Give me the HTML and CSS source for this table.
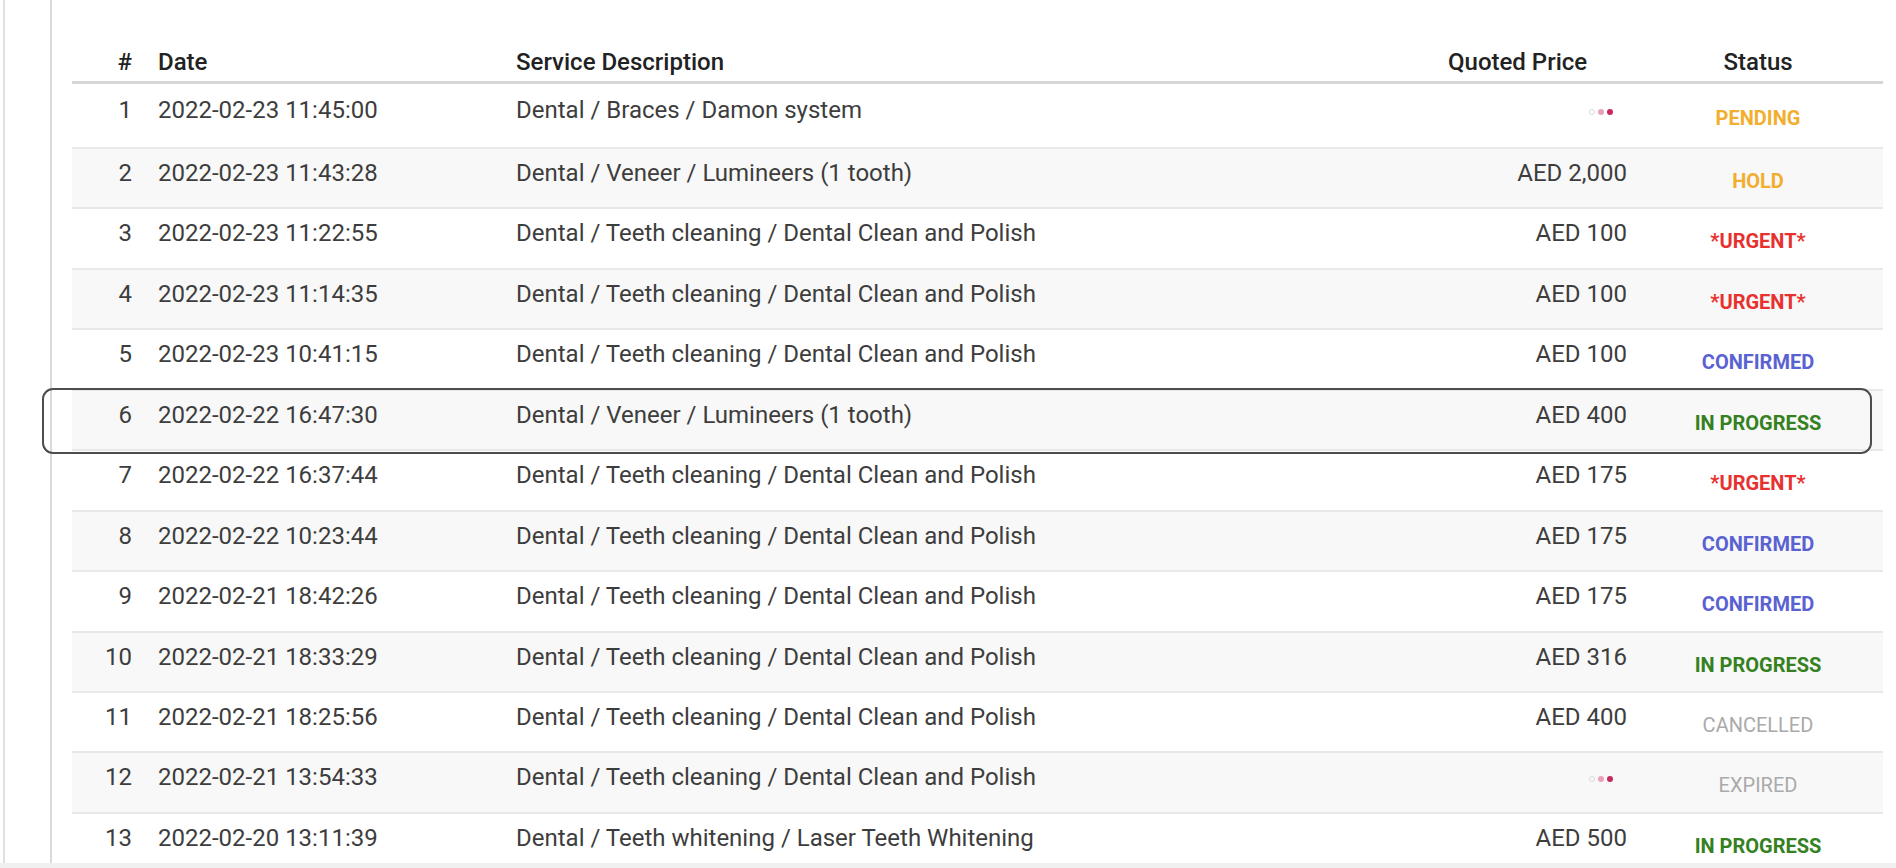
FILE: index.html
```html
<!DOCTYPE html>
<html lang="en">
<head>
<meta charset="utf-8">
<title>Requests</title>
<link rel="stylesheet" href="styles.css">
</head>
<body>
<div class="screen">
  <div class="shell">
    <aside class="rail"></aside>
    <main class="content">
      <table class="orders">
        <colgroup>
          <col class="w-num"><col class="w-date"><col class="w-svc"><col class="w-price"><col class="w-status">
        </colgroup>
        <thead>
          <tr>
            <th class="c-num">#</th>
            <th class="c-date">Date</th>
            <th class="c-svc">Service Description</th>
            <th class="c-price">Quoted Price</th>
            <th class="c-status">Status</th>
          </tr>
        </thead>
        <tbody>
          <tr>
            <td class="c-num">1</td><td class="c-date">2022-02-23 11:45:00</td>
            <td class="c-svc">Dental / Braces / Damon system</td>
            <td class="c-price"><span class="loader"><i></i><i></i><i></i></span></td>
            <td class="c-status"><span class="status pending">PENDING</span></td>
          </tr>
          <tr>
            <td class="c-num">2</td><td class="c-date">2022-02-23 11:43:28</td>
            <td class="c-svc">Dental / Veneer / Lumineers (1 tooth)</td>
            <td class="c-price">AED 2,000</td>
            <td class="c-status"><span class="status pending">HOLD</span></td>
          </tr>
          <tr>
            <td class="c-num">3</td><td class="c-date">2022-02-23 11:22:55</td>
            <td class="c-svc">Dental / Teeth cleaning / Dental Clean and Polish</td>
            <td class="c-price">AED 100</td>
            <td class="c-status"><span class="status urgent">*URGENT*</span></td>
          </tr>
          <tr>
            <td class="c-num">4</td><td class="c-date">2022-02-23 11:14:35</td>
            <td class="c-svc">Dental / Teeth cleaning / Dental Clean and Polish</td>
            <td class="c-price">AED 100</td>
            <td class="c-status"><span class="status urgent">*URGENT*</span></td>
          </tr>
          <tr>
            <td class="c-num">5</td><td class="c-date">2022-02-23 10:41:15</td>
            <td class="c-svc">Dental / Teeth cleaning / Dental Clean and Polish</td>
            <td class="c-price">AED 100</td>
            <td class="c-status"><span class="status confirmed">CONFIRMED</span></td>
          </tr>
          <tr>
            <td class="c-num">6</td><td class="c-date">2022-02-22 16:47:30</td>
            <td class="c-svc">Dental / Veneer / Lumineers (1 tooth)</td>
            <td class="c-price">AED 400</td>
            <td class="c-status"><span class="status progress">IN PROGRESS</span></td>
          </tr>
          <tr>
            <td class="c-num">7</td><td class="c-date">2022-02-22 16:37:44</td>
            <td class="c-svc">Dental / Teeth cleaning / Dental Clean and Polish</td>
            <td class="c-price">AED 175</td>
            <td class="c-status"><span class="status urgent">*URGENT*</span></td>
          </tr>
          <tr>
            <td class="c-num">8</td><td class="c-date">2022-02-22 10:23:44</td>
            <td class="c-svc">Dental / Teeth cleaning / Dental Clean and Polish</td>
            <td class="c-price">AED 175</td>
            <td class="c-status"><span class="status confirmed">CONFIRMED</span></td>
          </tr>
          <tr>
            <td class="c-num">9</td><td class="c-date">2022-02-21 18:42:26</td>
            <td class="c-svc">Dental / Teeth cleaning / Dental Clean and Polish</td>
            <td class="c-price">AED 175</td>
            <td class="c-status"><span class="status confirmed">CONFIRMED</span></td>
          </tr>
          <tr>
            <td class="c-num">10</td><td class="c-date">2022-02-21 18:33:29</td>
            <td class="c-svc">Dental / Teeth cleaning / Dental Clean and Polish</td>
            <td class="c-price">AED 316</td>
            <td class="c-status"><span class="status progress">IN PROGRESS</span></td>
          </tr>
          <tr>
            <td class="c-num">11</td><td class="c-date">2022-02-21 18:25:56</td>
            <td class="c-svc">Dental / Teeth cleaning / Dental Clean and Polish</td>
            <td class="c-price">AED 400</td>
            <td class="c-status"><span class="status muted">CANCELLED</span></td>
          </tr>
          <tr>
            <td class="c-num">12</td><td class="c-date">2022-02-21 13:54:33</td>
            <td class="c-svc">Dental / Teeth cleaning / Dental Clean and Polish</td>
            <td class="c-price"><span class="loader"><i></i><i></i><i></i></span></td>
            <td class="c-status"><span class="status muted">EXPIRED</span></td>
          </tr>
          <tr>
            <td class="c-num">13</td><td class="c-date">2022-02-20 13:11:39</td>
            <td class="c-svc">Dental / Teeth whitening / Laser Teeth Whitening</td>
            <td class="c-price">AED 500</td>
            <td class="c-status"><span class="status progress">IN PROGRESS</span></td>
          </tr>
        </tbody>
      </table>
    </main>
    <div class="focus-ring"></div>
  </div>
  <div class="bottom-bar"></div>
</div>
</body>
</html>
```
FILE: styles.css
```css
* { box-sizing: border-box; }
html, body { margin: 0; padding: 0; background: #fff; }
body {
  font-family: Roboto, "Liberation Sans", Arial, sans-serif;
  color: #3d3d3d;
  overflow: hidden;
}
.screen {
  width: 1896px;
  height: 868px;
  display: flex;
  flex-direction: column;
  overflow: hidden;
}
.shell {
  flex: 1;
  min-height: 0;
  display: flex;
  position: relative;
}
.rail {
  flex: none;
  margin-left: 3px;
  width: 49px;
  border-left: 2px solid #e0e0e0;
  border-right: 2px solid #dadada;
}
.content {
  flex: 1;
  min-width: 0;
  padding-left: 20px;
  overflow: hidden;
}
.bottom-bar {
  flex: none;
  height: 5px;
  background: #f0f0f0;
}

.orders {
  width: 1811px;
  table-layout: fixed;
  border-collapse: separate;
  border-spacing: 0;
  font-size: 24px;
}
.w-num { width: 78px; }
.w-date { width: 348px; }
.w-svc { width: 920px; }
.w-price { width: 223px; }
.w-status { width: 242px; }

.orders thead tr { height: 84px; }
.orders th {
  vertical-align: bottom;
  padding: 0 0 5px;
  line-height: 28px;
  font-weight: 500;
  color: #222;
  text-align: left;
  border-bottom: 3px solid #d6d6d6;
  white-space: nowrap;
}
.orders tbody tr { height: 60.45px; }
.orders tbody tr:first-child { height: 65px; }
.orders td {
  vertical-align: top;
  padding: 10px 0 0;
  line-height: 28px;
  border-bottom: 2px solid #e8e8e8;
  white-space: nowrap;
}
.orders tbody tr:first-child td { padding-top: 12px; }
.orders tbody tr:nth-child(even) td { background: #f8f8f8; }

.orders .c-num { text-align: right; padding-right: 18px; }
.orders .c-date { padding-left: 8px; }
.orders .c-svc { padding-left: 18px; }
.orders td.c-price { text-align: right; padding-right: 14px; }
.orders th.c-price { text-align: left; padding-left: 30px; }
.orders .c-status { text-align: center; padding-right: 8px; }
.orders td.c-status { padding-top: 17px; }
.orders tbody tr:first-child td.c-status { padding-top: 19px; }

.status {
  font-size: 20px;
  line-height: 24px;
  font-weight: 700;
  display: inline-block;
}
.status.pending { color: #f2ae2e; }
.status.urgent { color: #e8312f; }
.status.confirmed { color: #5a62d2; }
.status.progress { color: #35801f; }
.status.muted { color: #aaaaaa; font-weight: 400; }

.loader {
  display: inline-flex;
  gap: 3px;
  margin-right: 14px;
  vertical-align: middle;
}
.loader i {
  display: block;
  width: 6px;
  height: 6px;
  border-radius: 50%;
}
.loader i:nth-child(1) { border: 1px solid #dcdcdc; }
.loader i:nth-child(2) { background: #eca0b8; }
.loader i:nth-child(3) { background: #c8285e; }

.focus-ring {
  position: absolute;
  left: 42px;
  top: 388px;
  width: 1830px;
  height: 66px;
  border: 2px solid #4d4d4d;
  border-radius: 11px;
  pointer-events: none;
}
```
